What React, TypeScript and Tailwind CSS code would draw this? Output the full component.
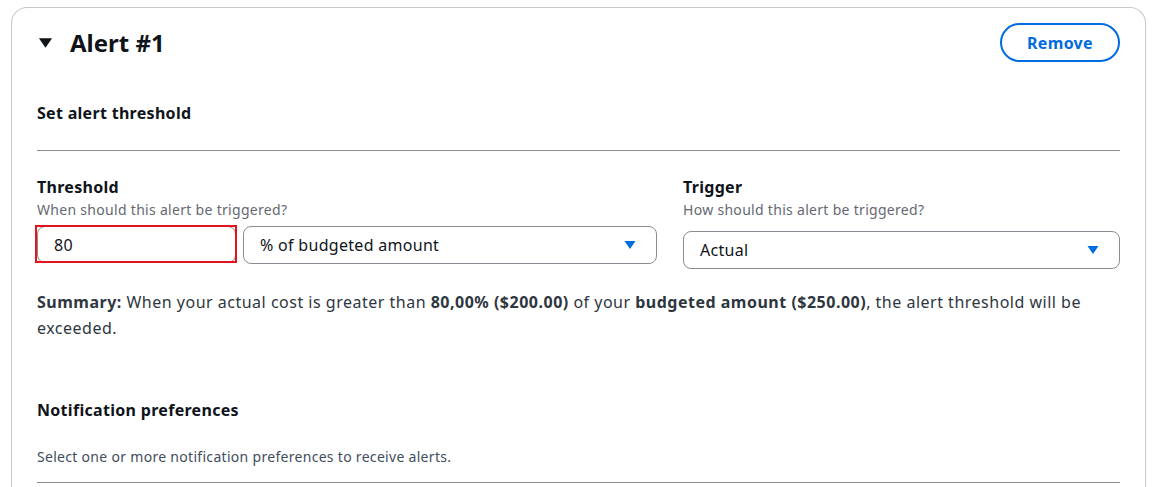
import React, { useState } from 'react';

const font = { fontFamily: '"Noto Sans", "Open Sans", Arial, sans-serif' };

function Caret({ className }: { className?: string }) {
  return (
    <svg viewBox="0 0 12 10" className={className}>
      <path d="M0.5 1 L11.5 1 L6 9 Z" fill="currentColor" />
    </svg>
  );
}

function Select({ value, className }: { value: string; className?: string }) {
  return (
    <button
      className={`flex h-[38px] items-center justify-between rounded-lg border border-[#8c8c94] bg-white pl-[16px] pr-[20px] text-[16px] text-[#0f141a] ${className ?? ''}`}
    >
      <span>{value}</span>
      <Caret className="h-[10px] w-[12px] text-[#006ce0]" />
    </button>
  );
}

export default function App() {
  const [threshold, setThreshold] = useState('80');

  return (
    <div className="min-h-screen bg-white pl-[11px] pt-[7px] tracking-[0.3px]" style={font}>
      <div className="w-[1135px] rounded-t-[16px] border border-b-0 border-[#c6c6cd] px-[25px] pt-[15px] pb-[4px]">
        {/* Header */}
        <div className="flex h-[39px] items-center justify-between">
          <div className="flex items-center">
            <Caret className="ml-[1px] h-[12px] w-[15px] text-[#0f141a]" />
            <h2 className="ml-[17px] text-[24px] font-bold leading-[30px] tracking-normal text-[#0f141a]">Alert #1</h2>
          </div>
          <button className="h-[39px] w-[120px] rounded-full border-2 border-[#006ce0] text-[16px] font-bold text-[#006ce0]">
            Remove
          </button>
        </div>

        <h3 className="mt-[40px] text-[16px] font-bold leading-[22px] text-[#0f141a]">Set alert threshold</h3>
        <div className="mt-[26px] border-t border-[#8c8c94]" />

        {/* Threshold + Trigger */}
        <div className="mt-[25px] grid grid-cols-[620px_1fr] gap-[26px]">
          <div>
            <div className="text-[16px] font-bold leading-[22px] text-[#0f141a]">Threshold</div>
            <div className="mt-[2px] text-[14px] leading-[20px] text-[#656871]">When should this alert be triggered?</div>
            <div className="mt-[6px] flex gap-[7px]">
              <div className="relative">
                <input
                  value={threshold}
                  onChange={e => setThreshold(e.target.value)}
                  className="h-[37px] w-[199px] rounded-lg border border-[#8c8c94] px-[16px] text-[16px] text-[#0f141a] outline-none"
                />
                <span className="pointer-events-none absolute -left-[2px] -top-[1px] h-[38px] w-[202px] border-2 border-[#e3141e]" />
              </div>
              <Select value="% of budgeted amount" className="w-[414px]" />
            </div>
          </div>
          <div>
            <div className="text-[16px] font-bold leading-[22px] text-[#0f141a]">Trigger</div>
            <div className="mt-[2px] text-[14px] leading-[20px] text-[#656871]">How should this alert be triggered?</div>
            <Select value="Actual" className="mt-[11px] w-full" />
          </div>
        </div>

        <p className="mt-[20px] text-[16px] leading-[26px] tracking-[0.5px] text-[#2e3640]">
          <span className="font-bold">Summary:</span> When your actual cost is greater than{' '}
          <span className="font-bold">80,00% ($200.00)</span> of your{' '}
          <span className="font-bold">budgeted amount ($250.00)</span>, the alert threshold will be exceeded.
        </p>

        <h3 className="mt-[58px] text-[16px] font-bold leading-[22px] text-[#0f141a]">Notification preferences</h3>
        <p className="mt-[26px] text-[14px] leading-[20px] text-[#414d5c]">
          Select one or more notification preferences to receive alerts.
        </p>
        <div className="mt-[15px] border-t border-[#8c8c94]" />
        <div className="h-[20px]" />
      </div>
    </div>
  );
}
